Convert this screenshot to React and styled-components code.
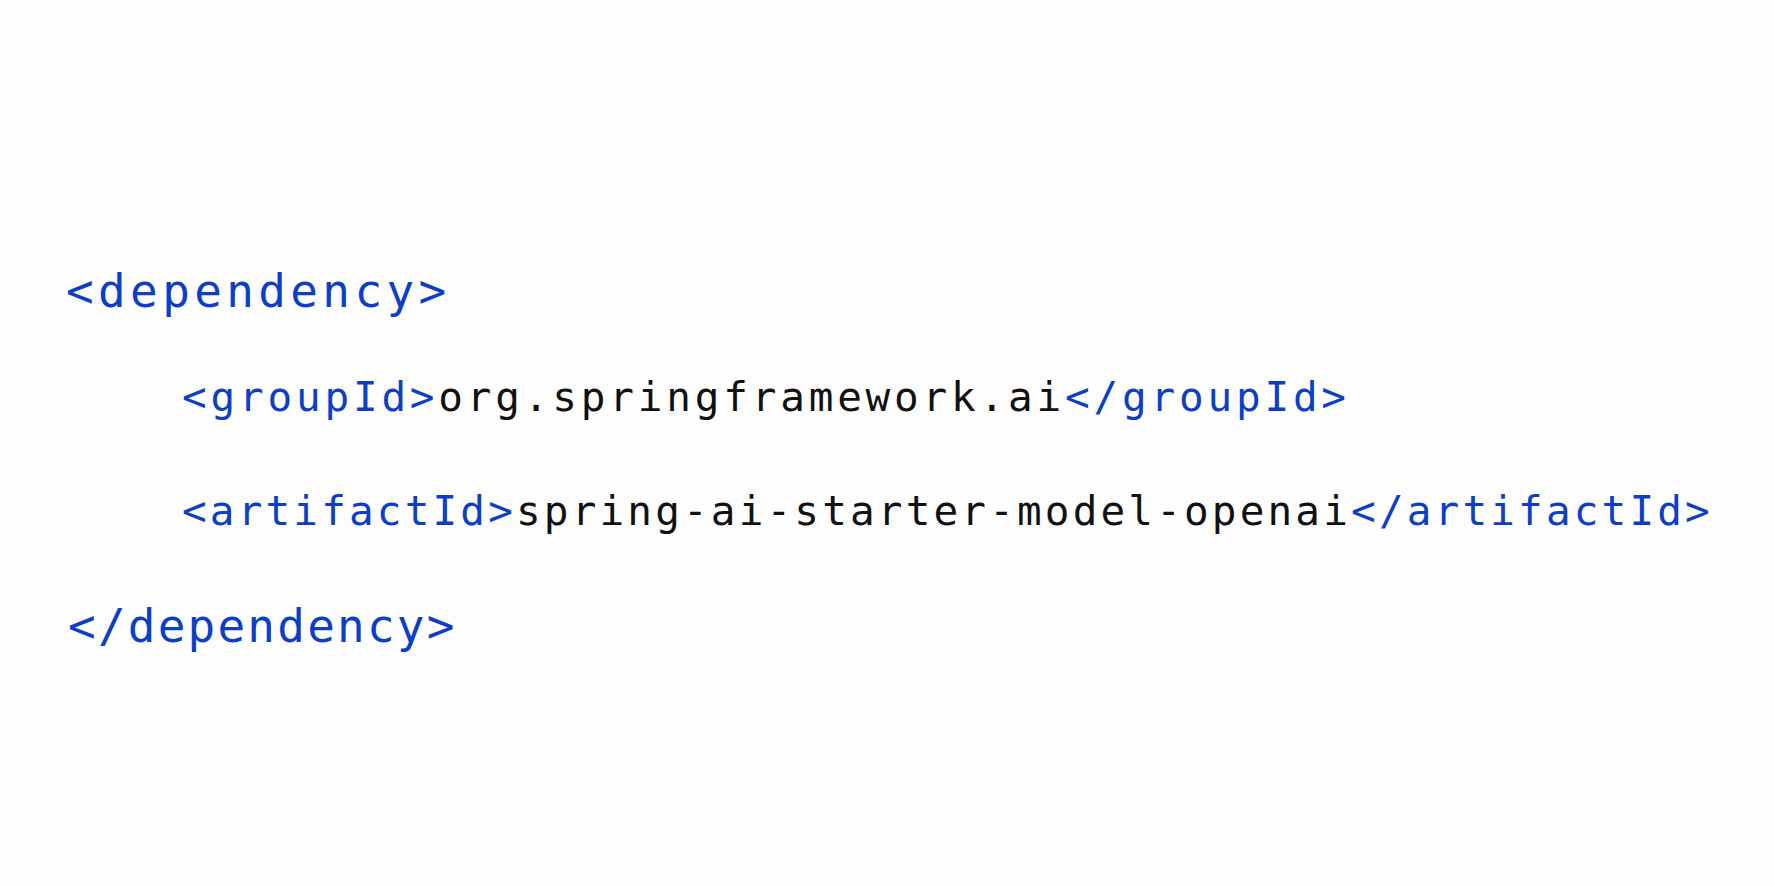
import React from "react";
import styled, { createGlobalStyle } from "styled-components";

const GlobalStyle = createGlobalStyle`
  html, body {
    margin: 0;
    padding: 0;
    background: #fdfdfd;
  }
`;

const Page = styled.div`
  width: 100%;
  height: 887px;
  box-sizing: border-box;
  padding: 235px 0 0 66px;
  background: #fdfdfd;
  font-family: "DejaVu Sans Mono", "Liberation Mono", monospace;
`;

// each line keeps a 112px line box; the block height sets the gap to the next line
const Line = styled.div`
  height: ${({ space }) => space || 112}px;
  line-height: 112px;
  white-space: pre;
  padding-left: ${({ indent }) => indent || 0}px;
  font-size: ${({ outer }) => (outer ? "46px" : "41px")};
  letter-spacing: ${({ spacing }) => spacing}px;
`;

const Tag = styled.span`
  color: #0d3fc6;
`;

const Value = styled.span`
  color: #111111;
`;

const App = () => (
  <>
    <GlobalStyle />
    <Page>
      <Line outer space={106} spacing={4.35}>
        <Tag>{"<dependency>"}</Tag>
      </Line>
      <Line indent={116} space={114} spacing={3.8}>
        <Tag>{"<groupId>"}</Tag>
        <Value>org.springframework.ai</Value>
        <Tag>{"</groupId>"}</Tag>
      </Line>
      <Line indent={116} space={115} spacing={3.15}>
        <Tag>{"<artifactId>"}</Tag>
        <Value>spring-ai-starter-model-openai</Value>
        <Tag>{"</artifactId>"}</Tag>
      </Line>
      <Line outer indent={2} spacing={2.2}>
        <Tag>{"</dependency>"}</Tag>
      </Line>
    </Page>
  </>
);

export default App;
